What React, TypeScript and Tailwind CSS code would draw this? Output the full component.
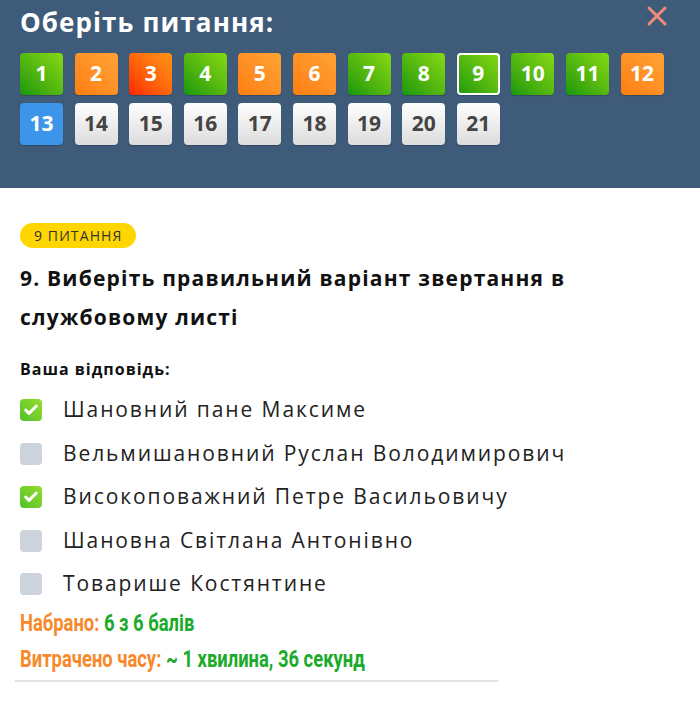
import { Check } from "lucide-react";

type Status = "green" | "orange" | "red" | "blue" | "gray";

const questions: { n: number; s: Status; current?: boolean }[] = [
  { n: 1, s: "green" },
  { n: 2, s: "orange" },
  { n: 3, s: "red" },
  { n: 4, s: "green" },
  { n: 5, s: "orange" },
  { n: 6, s: "orange" },
  { n: 7, s: "green" },
  { n: 8, s: "green" },
  { n: 9, s: "green", current: true },
  { n: 10, s: "green" },
  { n: 11, s: "green" },
  { n: 12, s: "orange" },
  { n: 13, s: "blue" },
  { n: 14, s: "gray" },
  { n: 15, s: "gray" },
  { n: 16, s: "gray" },
  { n: 17, s: "gray" },
  { n: 18, s: "gray" },
  { n: 19, s: "gray" },
  { n: 20, s: "gray" },
  { n: 21, s: "gray" },
];

const styles: Record<Status, string> = {
  green: "bg-gradient-to-tr from-[#10980c] to-[#86da14] text-white",
  orange: "bg-gradient-to-tr from-[#ff7e0e] to-[#ffa335] text-white",
  red: "bg-gradient-to-tr from-[#ff1e00] to-[#ff9418] text-white",
  blue: "bg-[#3d95e9] text-white",
  gray: "bg-gradient-to-b from-white to-[#dcdcdc] text-[#444]",
};

const answers = [
  { text: "Шановний пане Максиме", checked: true },
  { text: "Вельмишановний Руслан Володимирович", checked: false },
  { text: "Високоповажний Петре Васильовичу", checked: true },
  { text: "Шановна Світлана Антонівно", checked: false },
  { text: "Товарише Костянтине", checked: false },
];

export default function App() {
  return (
    <div className="w-[700px] h-[719px] bg-white font-['Open_Sans',sans-serif]">
      <div className="h-[188px] bg-[#3f5b7a] px-5 pt-[4px] relative">
        <h1 className="text-[26px] font-bold text-white leading-[36px] tracking-[1.1px]">Оберіть питання:</h1>
        <button className="absolute right-[32px] top-[5px] text-[#f2897a]">
          <svg width="22" height="22" viewBox="0 0 22 22">
            <path d="M3 3 L19 19 M19 3 L3 19" stroke="currentColor" strokeWidth="3" strokeLinecap="round" />
          </svg>
        </button>
        <div className="mt-[13px] grid grid-cols-[repeat(12,43px)] gap-x-[11.6px] gap-y-[8px]">
          {questions.map((q) => (
            <div
              key={q.n}
              className={`h-[42px] rounded-[4px] flex items-center justify-center text-[21px] font-bold shadow-[0_1px_1px_rgba(0,0,0,0.2)] ${styles[q.s]} ${q.current ? "ring-2 ring-white ring-inset" : ""}`}
            >
              {q.n}
            </div>
          ))}
        </div>
      </div>

      <div className="px-5 pt-[35px]">
        <span className="inline-block bg-[#ffd600] rounded-full px-[14px] h-[25px] leading-[25px] text-[14px] text-[#333] tracking-[1.1px]">
          9 ПИТАННЯ
        </span>
        <h2 className="mt-[11px] text-[21px] font-bold text-[#111] leading-[39px] tracking-[1.2px]">
          9. Виберіть правильний варіант звертання в службовому листі
        </h2>
        <div className="mt-[20px] text-[16px] font-bold text-[#111] tracking-[1px]">Ваша відповідь:</div>
        <div className="mt-[18px] flex flex-col gap-[21.5px]">
          {answers.map((a) => (
            <label key={a.text} className="flex items-center gap-[21px] h-[22px]">
              {a.checked ? (
                <span className="w-[22px] h-[22px] rounded-[4px] bg-gradient-to-tr from-[#52c12a] to-[#93dd2e] flex items-center justify-center">
                  <Check size={16} strokeWidth={4.5} className="text-white" />
                </span>
              ) : (
                <span className="w-[22px] h-[22px] rounded-[4px] bg-[#cdd3db]" />
              )}
              <span className="text-[21px] text-[#222] tracking-[1.9px]">{a.text}</span>
            </label>
          ))}
        </div>
        <div className="mt-[11px] font-['Roboto',sans-serif] text-[23px] font-bold leading-[36px]">
          <div className="inline-block origin-left scale-x-[0.8] whitespace-nowrap">
            <span className="text-[#f7892a]">Набрано:</span>{" "}
            <span className="text-[#1aab2a]">6 з 6 балів</span>
          </div>
        </div>
        <div className="font-['Roboto',sans-serif] text-[23px] font-bold leading-[36px]">
          <div className="inline-block origin-left scale-x-[0.8] whitespace-nowrap">
            <span className="text-[#f7892a]">Витрачено часу:</span>{" "}
            <span className="text-[#1aab2a]">~ 1 хвилина, 36 секунд</span>
          </div>
        </div>
        <div className="mt-[2px] w-[483px] -ml-[5px] h-[2px] bg-[#e2e2e2]" />
      </div>
    </div>
  );
}
